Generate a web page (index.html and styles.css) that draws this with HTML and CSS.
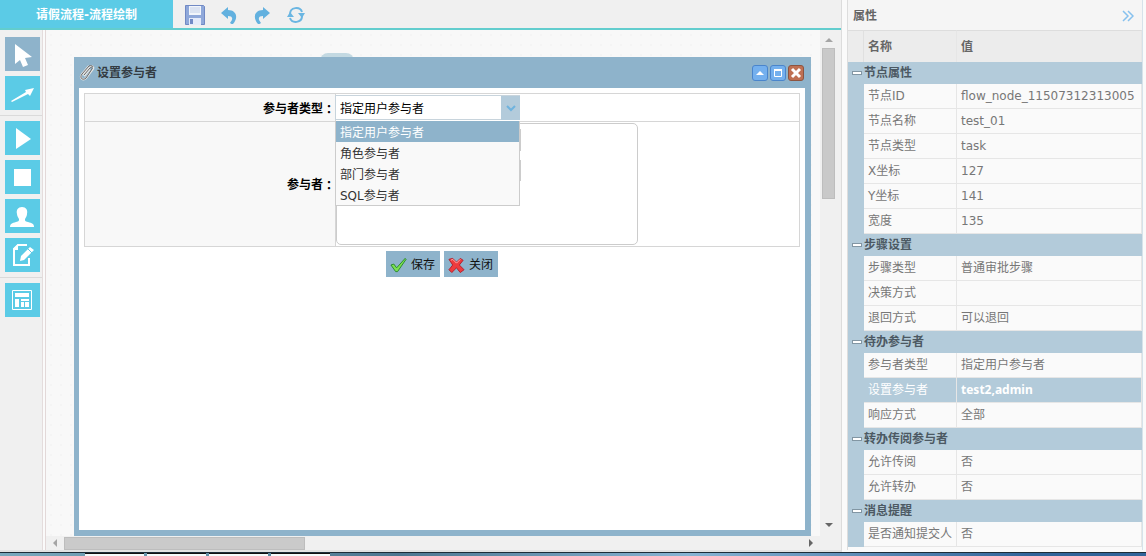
FILE: index.html
```html
<!DOCTYPE html>
<html lang="zh-CN">
<head>
<meta charset="utf-8">
<title>请假流程-流程绘制</title>
<link rel="stylesheet" href="styles.css">
</head>
<body>
<div class="screen">
  <main class="designer">
    <header class="topbar">
      <h1 class="flow-title">请假流程-流程绘制</h1>
      <div class="actions">
        <button class="action" aria-label="保存流程"><svg width="20" height="20" viewBox="0 0 20 20"><path d="M.5.5h18l1 1v18H.5z" fill="#8fa8da" stroke="#7189c4"/><path d="M4 1h12v9H4z" fill="#f1f5fb"/><path d="M5 3h10M5 5h10M5 7h10" stroke="#c4d0e8"/><path d="M4 13h12v7H4z" fill="#e3eafa"/><path d="M5 14h3v5H5z" fill="#7089c6"/></svg></button>
        <button class="action" aria-label="撤销"><svg width="18" height="18" viewBox="0 0 18 18"><path d="M1 7 8 1v3c8 0 11 7 5 14-1 0-2 0-3-1 4-5 2-7-2-7v3z" fill="#63b1df"/></svg></button>
        <button class="action" aria-label="重做"><svg width="18" height="18" viewBox="0 0 18 18"><path d="m17 7-7-6v3C2 4-1 11 5 18c1 0 2 0 3-1-4-5-2-7 2-7v3z" fill="#63b1df"/></svg></button>
        <button class="action" aria-label="刷新"><svg width="20" height="18" viewBox="0 0 20 18"><path d="M4 8c0-7 10-8 12-2M16 10c0 7-10 8-12 2" fill="none" stroke="#6bb6e2" stroke-width="2"/><path d="M12 7h7l-3 5zM8 11H1l3-5z" fill="#6bb6e2"/></svg></button>
      </div>
    </header>
    <div class="workspace">
      <nav class="tools" aria-label="绘图工具">
        <button class="tool tool-active" aria-label="选择"><svg width="35" height="34" viewBox="0 0 35 34"><path d="M10 7v20l5-4 3 7 5-2-3-7 7-1z" fill="#fff"/></svg></button>
        <button class="tool" aria-label="连线"><svg width="35" height="34" viewBox="0 0 35 34"><path d="m6 25 15-9-1-2 9-2-4 8-2-2-16 8z" fill="#fff"/></svg></button>
        <span class="tool-line"></span>
        <button class="tool" aria-label="开始"><svg width="35" height="34" viewBox="0 0 35 34"><path d="M11 7v21l15-10z" fill="#fff"/></svg></button>
        <button class="tool" aria-label="结束"><svg width="35" height="34" viewBox="0 0 35 34"><path d="M9 9h17v17H9z" fill="#fff"/></svg></button>
        <button class="tool" aria-label="任务"><svg width="35" height="34" viewBox="0 0 35 34"><path d="M17 8c4 0 6 3 5 7 0 2-1 3-2 5 0 2 0 2 3 3 4 1 6 2 6 5H5c0-3 2-4 6-5 3-1 3-1 3-3-1-2-2-3-2-5-1-4 1-7 5-7z" fill="#fff"/></svg></button>
        <button class="tool" aria-label="表单"><svg width="35" height="34" viewBox="0 0 35 34"><path d="M22 7H13l-4 4v16h15v-7" fill="none" stroke="#fff" stroke-width="2"/><path d="M8 12V11l5-5v6zM25 9l4 3-10 10-4 1 1-5z" fill="#fff"/><path d="m23 11 4 4" stroke="#5bcbe6"/></svg></button>
        <span class="tool-line"></span>
        <button class="tool" aria-label="布局"><svg width="35" height="34" viewBox="0 0 35 34"><path d="M7.500 7.500h19v19h-19z" fill="none" stroke="#fff"/><path d="M10 10h14v4H10zM10 16h4v8h-4zM16 16h8v2h-8zM16 19h3v5h-3zM20 19h4v5h-4z" fill="#fff"/></svg></button>
      </nav>
      <div class="stage">
        <div class="canvas">
          <div class="flow-node"></div>
          <section class="dialog" aria-label="设置参与者">
            <header class="dialog-head">
              <svg width="16" height="17" viewBox="0 0 16 17" fill="none"><path d="m4 11 7-8c2-2 4 0 3 2l-7 9c-3 3-7 0-4-4l7-8M5 12l6-7" stroke="#e4e6e6" stroke-width="2"/><path d="m5 11 6-7c2-2 3 0 2 1l-6 9c-3 3-7 0-4-4l7-8c2-1 4 0 4 1" stroke="#666"/></svg>
              <h2 class="dialog-title">设置参与者</h2>
              <div class="window-buttons">
                <button class="win" aria-label="折叠"><svg width="14" height="14" viewBox="0 0 14 14"><path d="M3 9h8L7 5z" fill="#fff"/></svg></button>
                <button class="win" aria-label="最大化"><svg width="14" height="14" viewBox="0 0 14 14"><path d="M3.500 4.500h7v6h-7z" fill="none" stroke="#fff"/><path d="M3 4h8" stroke="#fff" stroke-width="2"/></svg></button>
                <button class="win win-close" aria-label="关闭窗口"><svg width="14" height="14" viewBox="0 0 14 14"><path d="m3 3 8 8m0-8-8 8" stroke="#fff" stroke-width="3"/></svg></button>
              </div>
            </header>
            <form class="dialog-body">
              <div class="form-grid">
                <label class="field-name" for="kind">参与者类型<span class="colon" lang="zh-TW">：</span></label>
                <div class="field">
                  <div class="combo">
                    <select id="kind" class="combo-select"><option>指定用户参与者</option><option>角色参与者</option><option>部门参与者</option><option>SQL参与者</option></select>
                    <span class="combo-arrow"><svg width="12" height="8" viewBox="0 0 12 8"><path d="m2 2 4 4 4-4" fill="none" stroke="#6fb3de" stroke-width="2"/></svg></span>
                    <ul class="options" role="listbox" aria-label="参与者类型">
                      <li class="option option-on" role="option" aria-selected="true">指定用户参与者</li>
                      <li class="option" role="option">角色参与者</li>
                      <li class="option" role="option">部门参与者</li>
                      <li class="option" role="option">SQL参与者</li>
                    </ul>
                  </div>
                </div>
                <label class="field-name" for="people">参与者<span class="colon" lang="zh-TW">：</span></label>
                <div class="field"><textarea id="people" class="people"></textarea></div>
              </div>
              <div class="buttons">
                <button type="button" class="cmd"><svg width="17" height="16" viewBox="0 0 18 16"><path d="m1 8 3-1 3 4 9-10 1 1L8 15H6z" fill="#7ce052" stroke="#27882a"/></svg>保存</button>
                <button type="button" class="cmd"><svg width="17" height="16" viewBox="0 0 18 16"><path d="m1 2 4-1 4 4 4-4 3 2-4 5 5 5-4 3-4-5-5 5-3-3 4-5z" fill="#ee3b3e" stroke="#b51d2a"/><path d="m3 3 2-1 4 4 4-4" fill="none" stroke="#ffb0ae"/></svg>关闭</button>
              </div>
            </form>
          </section>
        </div>
        <div class="vbar"><span class="tri tri-up"></span><span class="vthumb"></span><span class="tri tri-down"></span></div>
        <div class="hbar"><span class="tri tri-left"></span><span class="hthumb"></span><span class="tri tri-right"></span></div>
      </div>
    </div>
  </main>
  <aside class="props">
    <header class="props-head"><h2 class="props-title">属性</h2><button class="collapse" aria-label="收起"><svg width="12" height="12" viewBox="0 0 12 12"><path d="m1 1 5 5-5 5M6 1l5 5-5 5" fill="none" stroke="#86c1ee" stroke-width="1.500"/></svg></button></header>
    <table class="grid">
      <colgroup><col class="col-gutter"><col class="col-name"><col></colgroup>
      <thead><tr><th></th><th>名称</th><th>值</th></tr></thead>
      <tbody>
        <tr class="group"><td><i class="minus"></i></td><th colspan="2">节点属性</th></tr>
        <tr><td></td><td>节点ID</td><td>flow_node_11507312313005</td></tr>
        <tr><td></td><td>节点名称</td><td>test_01</td></tr>
        <tr><td></td><td>节点类型</td><td>task</td></tr>
        <tr><td></td><td>X坐标</td><td>127</td></tr>
        <tr><td></td><td>Y坐标</td><td>141</td></tr>
        <tr><td></td><td>宽度</td><td>135</td></tr>
        <tr class="group"><td><i class="minus"></i></td><th colspan="2">步骤设置</th></tr>
        <tr><td></td><td>步骤类型</td><td>普通审批步骤</td></tr>
        <tr><td></td><td>决策方式</td><td></td></tr>
        <tr><td></td><td>退回方式</td><td>可以退回</td></tr>
        <tr class="group"><td><i class="minus"></i></td><th colspan="2">待办参与者</th></tr>
        <tr><td></td><td>参与者类型</td><td>指定用户参与者</td></tr>
        <tr class="picked"><td></td><td>设置参与者</td><td>test2,admin</td></tr>
        <tr><td></td><td>响应方式</td><td>全部</td></tr>
        <tr class="group"><td><i class="minus"></i></td><th colspan="2">转办传阅参与者</th></tr>
        <tr><td></td><td>允许传阅</td><td>否</td></tr>
        <tr><td></td><td>允许转办</td><td>否</td></tr>
        <tr class="group"><td><i class="minus"></i></td><th colspan="2">消息提醒</th></tr>
        <tr><td></td><td>是否通知提交人</td><td>否</td></tr>
      </tbody>
    </table>
  </aside>
  <footer class="taskbar"><span class="task-gap"></span><span class="task"></span><span class="task"></span><span class="task"></span><span class="task"></span></footer>
</div>
</body>
</html>
```
FILE: styles.css
```css
* { box-sizing: border-box; }
body {
  margin: 0;
  font: 12px/16px "DejaVu Sans", "Noto Sans CJK SC", sans-serif;
  color: #333;
  background: #fafafa;
}
button { padding: 0; border: 0; background: none; font: inherit; color: inherit; }
h1, h2 { margin: 0; font-size: 12px; line-height: 16px; }
svg { display: block; flex: none; }

.screen {
  display: grid;
  grid-template: minmax(0, 1fr) 4px / minmax(0, 1fr) 304px;
  height: 100vh;
  overflow: hidden;
}
.designer {
  display: flex;
  flex-direction: column;
  min-height: 0;
  border-right: 1px solid #dcdcdc;
  border-bottom: 2px solid #e2e2e2;
}
.topbar {
  display: flex;
  height: 30px;
  flex: none;
  background: #f0f0f0;
  border-bottom: 2px solid #62cdce;
}
.flow-title {
  width: 173px;
  line-height: 30px;
  text-align: center;
  color: #fff;
  background: #5bcbe6;
}
.actions { display: flex; align-items: center; gap: 15px; padding: 2px 12px 0; }
.workspace { display: flex; flex: 1; min-height: 0; }
.tools {
  display: flex;
  flex-direction: column;
  gap: 5px;
  width: 43px;
  padding: 7px 2px 0 5px;
  background: #f0f0f0;
  border-right: 1px solid #e4dcdc;
}
.tool { width: 35px; height: 34px; background: #5bcbe6; }
.tool-active { background: #8eb3cb; }
.tool-line { height: 1px; margin: 0 -2px 0 -5px; background: #dadada; }
.stage {
  display: grid;
  grid-template: minmax(0, 1fr) 14px / minmax(0, 1fr) 17px;
  flex: 1;
  margin-left: 2px;
  padding-right: 4px;
  border-left: 1px solid #e2d8d8;
  background: #f0f0f0;
}
.canvas {
  position: relative;
  background: #f8f8f8 radial-gradient(#f4f4f4 1px, transparent 1px) 0 0 / 10px 10px;
}
.flow-node {
  position: absolute;
  left: 274px;
  top: 23px;
  width: 34px;
  height: 20px;
  border-radius: 8px;
  background: #c3d9e2;
}
.dialog {
  position: absolute;
  inset: 27px 9px 0 28px;
  display: flex;
  flex-direction: column;
  padding: 0 6px 6px 5px;
  background: #8eb3cb;
}
.dialog-head { display: flex; align-items: center; height: 31px; flex: none; padding-right: 1px; }
.dialog-title { flex: 1; padding-left: 2px; color: #333b42; }
.window-buttons { display: flex; gap: 2px; }
.win { width: 16px; height: 16px; border: 1px solid #4a85cc; border-radius: 3px; background: #74b0ee; }
.win-close { border-color: #8d5440; background: #bf7053; }
.dialog-body { flex: 1; padding: 5px; background: #fff; }
.form-grid {
  display: grid;
  grid-template-columns: 250px minmax(0, 1fr);
  gap: 1px;
  padding: 1px;
  background: #d6d6d6;
}
.field-name {
  display: flex;
  align-items: center;
  justify-content: flex-end;
  padding-top: 2px;
  background: #f8f8f8;
  color: #000;
  font-weight: bold;
}
.colon { font-family: "Noto Sans CJK TC", sans-serif; }
.field { padding: 1px 0; background: #fff; }
.combo { position: relative; width: 185px; margin-left: -1px; }
.combo-select {
  display: block;
  width: 100%;
  height: 25px;
  padding: 2px 24px 0 4px;
  border: 1px solid #c8d4dc;
  border-radius: 0;
  appearance: none;
  background: #fff;
  font: inherit;
  color: #000;
}
.combo-arrow {
  position: absolute;
  top: 1px;
  right: 0;
  display: grid;
  place-items: center;
  width: 19px;
  height: 24px;
  background: #b3cbdb;
  pointer-events: none;
}
.options {
  position: absolute;
  top: 26px;
  left: 0;
  z-index: 2;
  width: 100%;
  margin: 0;
  padding: 0;
  list-style: none;
  background: #f9f9f9;
  border: 1px solid #ccc;
  border-top: 0;
}
.options::after {
  content: "";
  position: absolute;
  top: 8px;
  left: 100%;
  width: 2px;
  height: 52px;
  background: linear-gradient(#ccc 22px, transparent 22px 31px, #ccc 31px);
}
.option { height: 21px; padding-left: 4px; line-height: 24px; }
.option-on { background: #8eb3cb; color: #fff; }
.people {
  display: block;
  width: 302px;
  height: 122px;
  border: 1px solid #ccc;
  border-radius: 5px;
  background: #fff;
  resize: none;
}
.buttons { display: flex; justify-content: center; gap: 4px; padding: 4px 0; }
.cmd {
  display: flex;
  align-items: center;
  gap: 4px;
  height: 26px;
  padding: 2px 5px 0 4px;
  background: #8eb3cb;
  color: #111;
}

.vbar { display: flex; flex-direction: column; align-items: center; padding: 8px 2px 9px; }
.vthumb { width: 13px; height: 151px; margin: 6px 0 auto; background: #c9c9c9; border: 1px solid #bdbdbd; }
.hbar { display: flex; align-items: center; padding: 0 7px; }
.hthumb { width: 241px; height: 13px; margin: 0 auto 0 7px; background: #cacaca; border: 1px solid #bdbdbd; }
.tri { border: 4px solid transparent; }
.tri-up { border-top: 0; border-bottom-color: #a5a5a5; }
.tri-down { border-bottom: 0; border-top-color: #666; }
.tri-left { border-left: 0; border-right-color: #a5a5a5; }
.tri-right { border-right: 0; border-left-color: #666; }

.props { margin: 0 3px 2px 5px; border-left: 1px solid #ddd; border-right: 1px solid #d6e2ea; overflow: hidden; }
.props-head {
  display: flex;
  align-items: center;
  justify-content: space-between;
  height: 30px;
  padding: 2px 8px 0 5px;
  background: #f5f5f5;
}
.props-title { color: #666; }
.grid { width: 100%; table-layout: fixed; border-spacing: 0; color: #777; }
.col-gutter { width: 16px; }
.col-name { width: 93px; }
.grid td, .grid th { height: 25px; padding: 0; text-align: left; white-space: nowrap; }
.grid td { border-bottom: 1px solid #e6e6e6; overflow: hidden; }
.grid td + td, .grid thead th + th { padding-left: 4px; border-right: 1px solid #e6e6e6; }
.grid td:first-child { background: #b3cbda; border-bottom: 0; }
.grid thead th { height: 32px; background: #ececec; border-top: 1px solid #ddd; color: #666; border-right: 1px solid #e0e0e0; }
.grid .group td, .grid .group th { height: 22px; background: #b3cbda; color: #4c5963; border: 0; }
.grid .picked td { background: #b3cbda; color: #fff; }
.grid .picked td:last-child { font-family: "Noto Sans", sans-serif; font-weight: bold; }
.minus { display: block; width: 10px; height: 4px; margin: 0 auto 0 4px; background: #fff; border: 1px solid #8296a3; }

.taskbar {
  grid-column: 1 / -1;
  display: flex;
  gap: 3px;
  border-top: 1px solid #1c2c38;
  background: linear-gradient(90deg, #79a9bd 0, #4d7690 35%, #88b4d3 60%, #31649a 90%);
}
.task-gap { width: 82px; }
.task { width: 59px; background: #f5fafb; border-top: 1px solid #111; }
```
